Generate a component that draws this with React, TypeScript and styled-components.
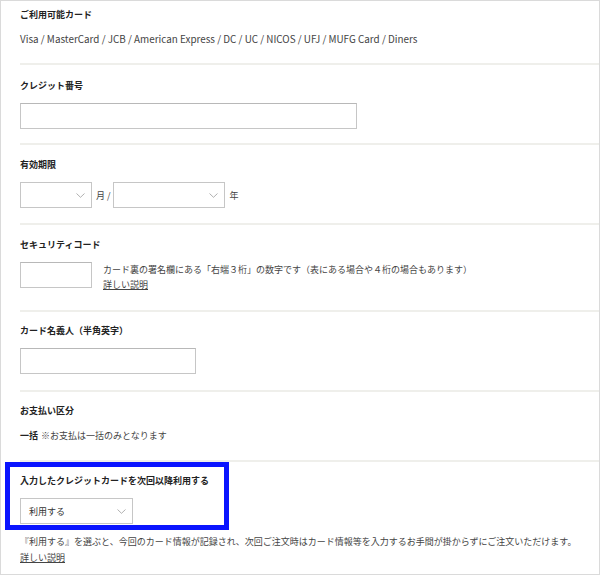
import React from 'react';
import styled, { createGlobalStyle } from 'styled-components';

const Global = createGlobalStyle`
  html, body { margin: 0; padding: 0; background: #fff; }
  body { font-family: "Noto Sans CJK JP", "Noto Sans", sans-serif; color: #333; }
  * { box-sizing: border-box; }
`;

const Page = styled.div`
  width: 600px;
  height: 575px;
  border: 1px solid #dadada;
  overflow: hidden;
`;

const Section = styled.section<{ $pt: number; $pb: number }>`
  margin-left: 19px;
  padding: ${(p) => p.$pt}px 0 ${(p) => p.$pb}px;
  border-bottom: 2px solid #efefeb;
`;

const Title = styled.h3<{ $mb: number }>`
  margin: 0 0 ${(p) => p.$mb}px;
  font-size: 9px;
  line-height: 16px;
  font-weight: 700;
  color: #222;
`;

const Text = styled.p`
  margin: 0;
  font-size: 9px;
  line-height: 16px;
  color: #444;
`;

const LatinText = styled(Text)`
  font-size: 9.9px;
`;

const Input = styled.div<{ $w: number }>`
  width: ${(p) => p.$w}px;
  height: 26px;
  border: 1px solid #c6c6c6;
  border-top-color: #b8b8b8;
  background: #fff;
`;

const SelectBox = styled.div<{ $w: number }>`
  width: ${(p) => p.$w}px;
  height: 26px;
  border: 1px solid #c6c6c6;
  display: flex;
  align-items: center;
  justify-content: space-between;
  padding: 0 6px 0 8px;
  font-size: 9px;
  color: #333;
  background: #fff;
`;

const Row = styled.div<{ $align?: string }>`
  display: flex;
  align-items: ${(p) => p.$align || 'center'};
`;

const Unit = styled.span<{ $ml: number; $mr: number }>`
  margin: 0 ${(p) => p.$mr}px 0 ${(p) => p.$ml}px;
  font-size: 9px;
  color: #444;
`;

const Note = styled.div`
  margin-left: 11px;
  margin-top: 0px;
  font-size: 9px;
  line-height: 15px;
  color: #444;
`;

const Link = styled.a`
  color: #444;
  text-decoration: underline;
  font-size: 9px;
  cursor: pointer;
`;

const Strong = styled.b`
  color: #222;
  font-weight: 700;
  margin-right: 3px;
`;

const Highlight = styled.div`
  margin: 0 0 0 4px;
  width: 224px;
  border: 5px solid #0a14ff;
  padding: 6px 0 1px 10px;
`;

const Footer = styled.div`
  margin: 4px 0 0 19px;
  font-size: 9px;
  line-height: 16px;
  color: #444;
`;

const Chevron = () => (
  <svg width="9" height="5" viewBox="0 0 9 5" fill="none">
    <path d="M0.5 0.5 L4.5 4.3 L8.5 0.5" stroke="#a8a8a8" strokeWidth="0.9" />
  </svg>
);

export default function App() {
  return (
    <>
      <Global />
      <Page>
        <Section $pt={6} $pb={16}>
          <Title $mb={8}>ご利用可能カード</Title>
          <LatinText>Visa / MasterCard / JCB / American Express / DC / UC / NICOS / UFJ / MUFG Card / Diners</LatinText>
        </Section>
        <Section $pt={13} $pb={14}>
          <Title $mb={9}>クレジット番号</Title>
          <Input $w={337} />
        </Section>
        <Section $pt={12} $pb={15}>
          <Title $mb={9}>有効期限</Title>
          <Row>
            <SelectBox $w={72}>
              <span />
              <Chevron />
            </SelectBox>
            <Unit $ml={4} $mr={2}>月 /</Unit>
            <SelectBox $w={112}>
              <span />
              <Chevron />
            </SelectBox>
            <Unit $ml={5} $mr={0}>年</Unit>
          </Row>
        </Section>
        <Section $pt={12} $pb={18}>
          <Title $mb={9}>セキュリティコード</Title>
          <Row $align="flex-start">
            <Input $w={72} />
            <Note>
              カード裏の署名欄にある「右端３桁」の数字です（表にある場合や４桁の場合もあります）
              <br />
              <Link>詳しい説明</Link>
            </Note>
          </Row>
        </Section>
        <Section $pt={11} $pb={16}>
          <Title $mb={9}>カード名義人（半角英字）</Title>
          <Input $w={176} />
        </Section>
        <Section $pt={11} $pb={16}>
          <Title $mb={9}>お支払い区分</Title>
          <Text>
            <Strong>一括</Strong>※お支払は一括のみとなります
          </Text>
        </Section>
        <Highlight>
          <Title $mb={9}>入力したクレジットカードを次回以降利用する</Title>
          <SelectBox $w={113}>
            <span>利用する</span>
            <Chevron />
          </SelectBox>
        </Highlight>
        <Footer>
          『利用する』を選ぶと、今回のカード情報が記録され、次回ご注文時はカード情報等を入力するお手間が掛からずにご注文いただけます。
          <br />
          <Link>詳しい説明</Link>
        </Footer>
      </Page>
    </>
  );
}
